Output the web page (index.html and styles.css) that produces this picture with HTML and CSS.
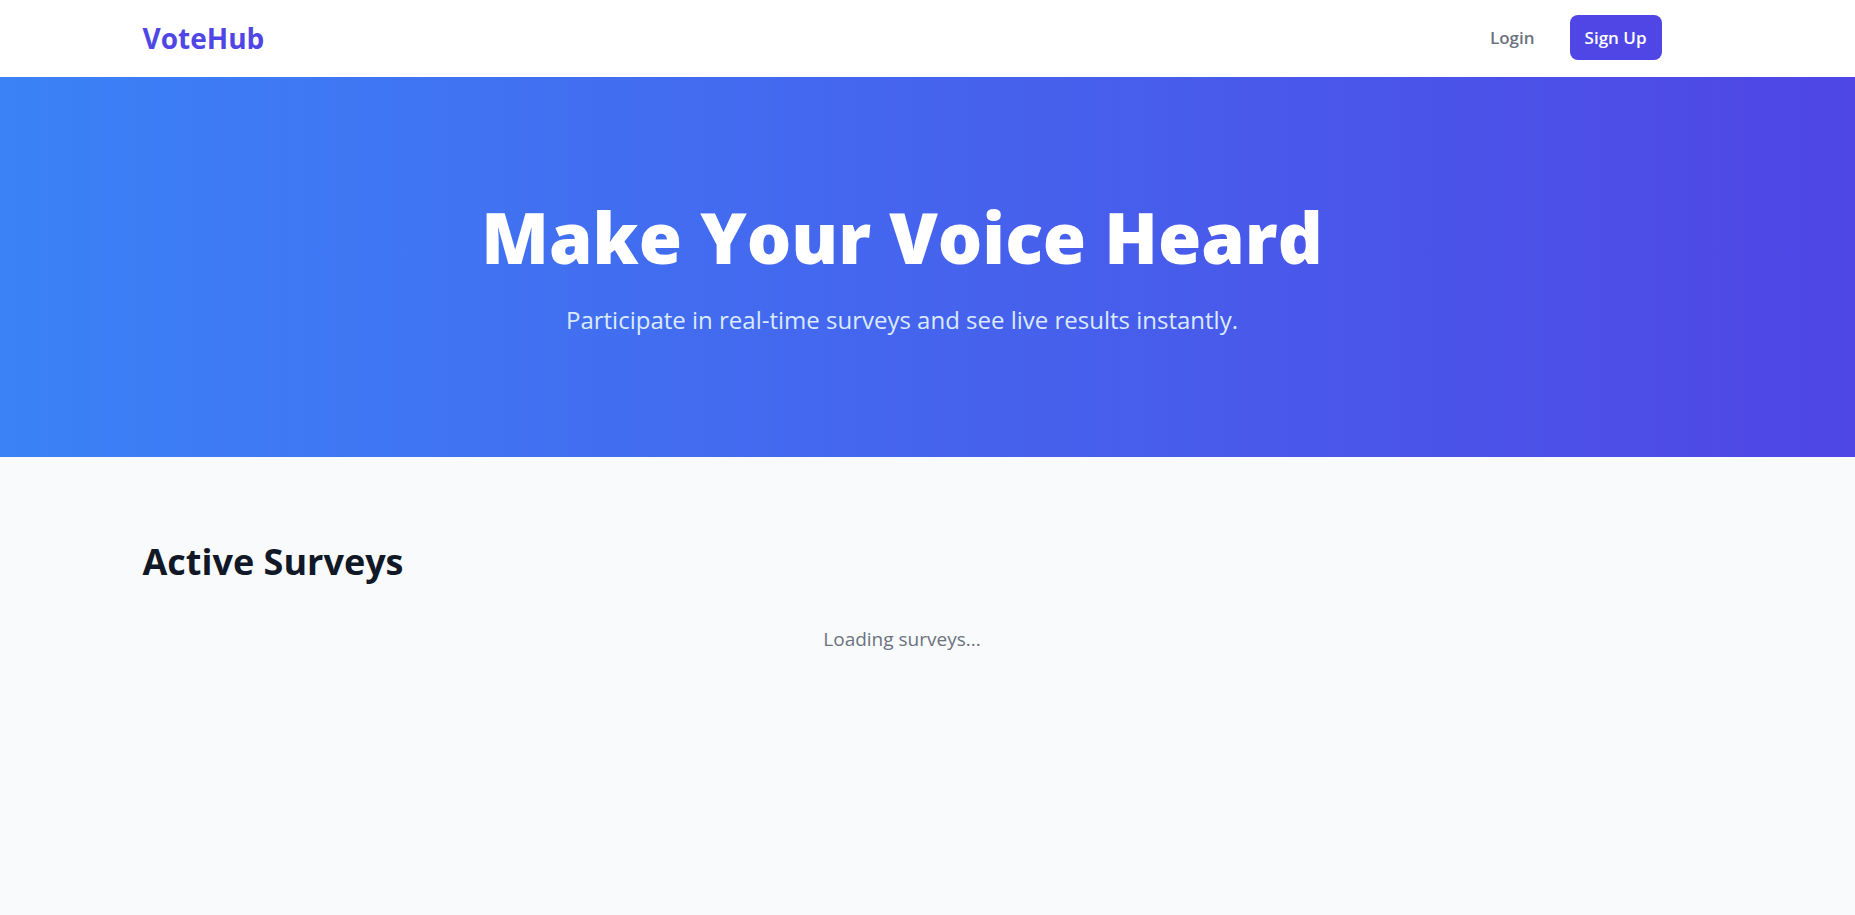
FILE: index.html
```html
<!DOCTYPE html>
<html lang="en">
<head>
<meta charset="utf-8">
<meta name="viewport" content="width=device-width, initial-scale=1">
<title>VoteHub</title>
<link rel="stylesheet" href="styles.css">
</head>
<body>
<header class="site-header">
  <nav class="container nav">
    <a class="brand" href="#">VoteHub</a>
    <div class="nav-actions">
      <a class="nav-link" href="#">Login</a>
      <a class="nav-link nav-link-primary" href="#">Sign Up</a>
    </div>
  </nav>
</header>
<section class="hero">
  <div class="container hero-content">
    <h1 class="hero-title">Make Your Voice Heard</h1>
    <p class="hero-text">Participate in real-time surveys and see live results instantly.</p>
  </div>
</section>
<main class="container surveys">
  <h2 class="surveys-title">Active Surveys</h2>
  <p class="surveys-status">Loading surveys...</p>
</main>
</body>
</html>
```

FILE: styles.css
```css
* {
  box-sizing: border-box;
}

body {
  margin: 0;
  min-height: 100vh;
  background: #f9fafb;
  color: #111827;
  font-family: "Segoe UI", "Open Sans", "Noto Sans", sans-serif;
}

h1, h2, p {
  margin: 0;
}

a {
  text-decoration: none;
}

.container {
  max-width: 1600px;
  margin: 0 auto;
  padding-left: 15px;
  padding-right: 66px;
}

.site-header {
  background: #fff;
}

.nav {
  display: flex;
  align-items: center;
  justify-content: space-between;
  padding-top: 15px;
  padding-bottom: 17px;
}

.brand {
  color: #4f46e5;
  font-size: 28px;
  font-weight: 700;
  line-height: 40px;
}

.nav-actions {
  display: flex;
  gap: 20px;
}

.nav-link {
  padding: 10px 15px;
  border-radius: 8px;
  color: #6b7280;
  font-size: 17px;
  font-weight: 600;
  line-height: 25px;
}

.nav-link-primary {
  background: #4f46e5;
  color: #fff;
}

.hero {
  background: linear-gradient(to right, #3b82f6, #4f46e5);
  padding: 120px 0;
  text-align: center;
}

.hero-title {
  color: #fff;
  font-size: 70px;
  font-weight: 800;
  line-height: 80px;
}

.hero-text {
  margin-top: 26px;
  color: #dbeafe;
  font-size: 24px;
  line-height: 34px;
}

.surveys {
  padding-top: 82px;
  padding-bottom: 80px;
}

.surveys-title {
  font-size: 36px;
  font-weight: 700;
  line-height: 45px;
}

.surveys-status {
  margin-top: 40px;
  color: #6b7280;
  font-size: 19px;
  line-height: 30px;
  text-align: center;
}
```
